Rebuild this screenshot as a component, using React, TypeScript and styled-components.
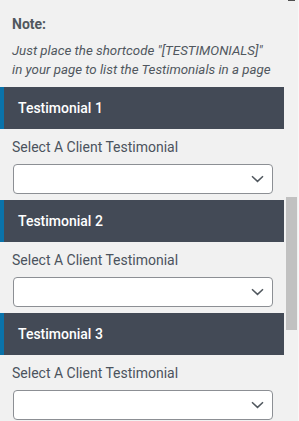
import { createGlobalStyle, styled } from "styled-components";

const GlobalStyle = createGlobalStyle`
  html, body {
    margin: 0;
    padding: 0;
    background: #f1f1f1;
    overflow: hidden;
  }
  body {
    font-family: Roboto, "Liberation Sans", Arial, sans-serif;
  }
`;

const Page = styled.div`
  display: flex;
  width: 299px;
  height: 421px;
  overflow: hidden;
`;

const Panel = styled.div`
  width: 284px;
  flex-shrink: 0;
`;

const Note = styled.div`
  padding: 16px 0 0 12px;
  height: 71px;
`;

const NoteTitle = styled.div`
  font-size: 14px;
  font-weight: 700;
  line-height: 16px;
  color: #50575e;
  margin-bottom: 10px;
`;

const NoteText = styled.div`
  font-size: 13.3px;
  font-style: italic;
  line-height: 18.5px;
  color: #50575e;
  white-space: nowrap;
`;

const Section = styled.div`
  padding-bottom: 6px;
`;

const Header = styled.div`
  height: 42px;
  display: flex;
  align-items: center;
  background: #434a56;
  border-left: 4px solid #0a73aa;
  padding-left: 14px;
  color: #ffffff;
  font-size: 14px;
  font-weight: 500;
`;

const Label = styled.div`
  padding: 10px 12px 0;
  height: 25px;
  font-size: 14px;
  font-weight: 400;
  line-height: 16px;
  color: #4b535d;
`;

const SelectBox = styled.div`
  margin-left: 13px;
  width: 260px;
  height: 30px;
  box-sizing: border-box;
  border: 1px solid #8c8f94;
  border-radius: 4px;
  background: #ffffff;
  display: flex;
  align-items: center;
  justify-content: flex-end;
  padding-right: 8px;
`;

const Track = styled.div`
  width: 15px;
  flex-shrink: 0;
  display: flex;
  flex-direction: column;
  align-items: flex-start;
  box-sizing: border-box;
  border-right: 1px solid #f8f8f8;
`;

const ArrowEdge = styled.div`
  width: 7px;
  height: 1px;
  margin-left: 4px;
  background: #505050;
`;

const Thumb = styled.div`
  width: 11px;
  height: 133px;
  margin-top: 196px;
  margin-left: 2px;
  background: #c1c1c1;
`;

function Chevron() {
  return (
    <svg width="13" height="8" viewBox="0 0 13 8">
      <path d="M1 1.2 L6.5 6.4 L12 1.2" fill="none" stroke="#50575e" strokeWidth="1.5" />
    </svg>
  );
}

const items = ["Testimonial 1", "Testimonial 2", "Testimonial 3"];

export default function App() {
  return (
    <>
      <GlobalStyle />
      <Page>
        <Panel>
          <Note>
            <NoteTitle>Note:</NoteTitle>
            <NoteText>
              Just place the shortcode "[TESTIMONIALS]"
              <br />
              in your page to list the Testimonials in a page
            </NoteText>
          </Note>
          {items.map((name) => (
            <Section key={name}>
              <Header>{name}</Header>
              <Label>Select A Client Testimonial</Label>
              <SelectBox>
                <Chevron />
              </SelectBox>
            </Section>
          ))}
        </Panel>
        <Track>
          <ArrowEdge />
          <Thumb />
        </Track>
      </Page>
    </>
  );
}
